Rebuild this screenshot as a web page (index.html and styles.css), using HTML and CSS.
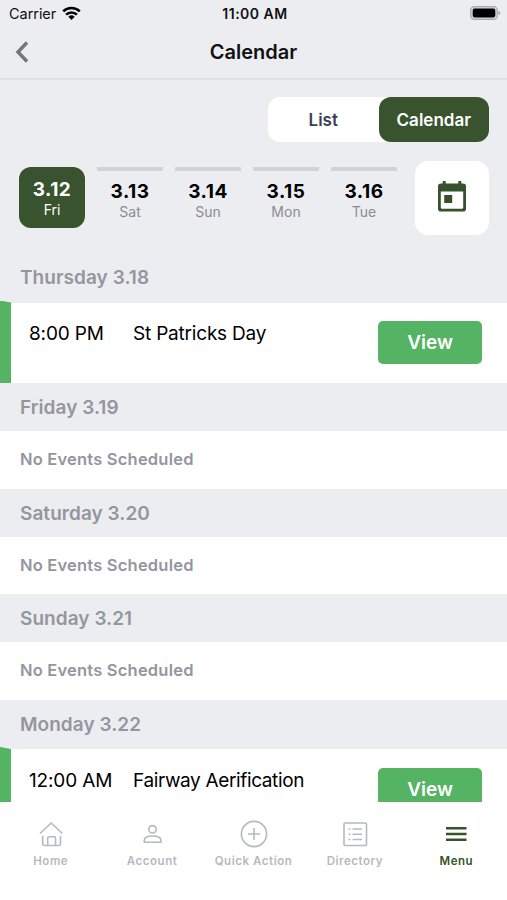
FILE: index.html
```html
<!DOCTYPE html>
<html lang="en">
<head>
<meta charset="utf-8">
<title>Calendar</title>
<link rel="stylesheet" href="styles.css">
</head>
<body>
<div class="app">
  <div class="status">
    <div class="carrier"><span>Carrier</span>
      <svg class="wifi" width="19" height="15" viewBox="0 0 20 15" fill="none" stroke="#000" stroke-width="2.7"><path d="M1.3 5.2a12.600 12.600 0 0 1 17.400 0M4.300 8.700a8.200 8.200 0 0 1 11.400 0"/><path d="M6.700 11a4.800 4.800 0 0 1 6.600 0L10 14.400z" fill="#000" stroke="none"/></svg>
    </div>
    <span class="clock">11:00 AM</span>
    <svg class="battery" width="31" height="14" viewBox="0 0 31 14"><rect x=".7" y=".7" width="26.6" height="12.6" rx="3.6" fill="#d5d6d8" stroke="#aaabad" stroke-width="1.2"/><rect x="2.7" y="2.6" width="22.6" height="8.8" rx="1.8"/><path d="M28.4 4.7q2 .7 2 2.3t-2 2.3z" fill="#aaabad"/></svg>
  </div>
  <header class="nav">
    <svg class="back" width="14" height="22" viewBox="0 0 14 22" fill="none" stroke="#76777a" stroke-width="3.5"><path d="M12 1.5 3 11l9 9.5"/></svg>
    <h1>Calendar</h1>
  </header>
  <main class="content">
    <div class="toggle"><button class="option">List</button><button class="option selected">Calendar</button></div>
    <div class="days">
      <div class="day active"><b>3.12</b><span>Fri</span></div>
      <div class="day"><b>3.13</b><span>Sat</span></div>
      <div class="day"><b>3.14</b><span>Sun</span></div>
      <div class="day"><b>3.15</b><span>Mon</span></div>
      <div class="day"><b>3.16</b><span>Tue</span></div>
      <button class="picker" aria-label="Pick a date">
        <svg width="28" height="31" viewBox="0 0 28 31" fill="#35522b"><path fill-rule="evenodd" d="M4.7 0h3v2.6h12.6V0h3v2.6h1.9Q28 2.6 28 5.4v22.4q0 2.8-2.8 2.8H2.8Q0 30.600 0 27.800V5.400q0-2.800 2.800-2.800h1.900zM2.800 10.400v16.200q0 1.200 1.200 1.200h20q1.200 0 1.200-1.200V10.400z"/><rect x="6.200" y="14" width="8" height="8"/></svg>
      </button>
    </div>
    <h2 class="date first">Thursday 3.18</h2>
    <article class="event"><span class="time">8:00 PM</span><span class="name">St Patricks Day</span><button class="view">View</button></article>
    <h2 class="date">Friday 3.19</h2>
    <p class="empty">No Events Scheduled</p>
    <h2 class="date">Saturday 3.20</h2>
    <p class="empty">No Events Scheduled</p>
    <h2 class="date">Sunday 3.21</h2>
    <p class="empty">No Events Scheduled</p>
    <h2 class="date last">Monday 3.22</h2>
    <article class="event"><span class="time">12:00 AM</span><span class="name fairway">Fairway Aerification</span><button class="view">View</button></article>
  </main>
  <nav class="tabs">
    <a class="tab"><svg viewBox="0 0 28 28"><path d="m3 13.500 11.200-10.500 11.200 10.500M5.700 15.800v7.700q0 2 2 2h13.800q2 0 2-2v-7.700M10.700 25.500v-7.300q0-1.500 1.500-1.500h4.800q1.500 0 1.500 1.500v7.300"/></svg><span>Home</span></a>
    <a class="tab"><svg viewBox="0 0 28 28"><circle cx="14.500" cy="9.300" r="3.700"/><path d="M6.300 22.200v-1.900c0-3 4-4.300 8.300-4.300s8.300 1.300 8.300 4.300v1.900z"/></svg><span>Account</span></a>
    <a class="tab"><svg viewBox="0 0 28 28"><circle cx="14" cy="14" r="12.600"/><path d="M14 8v12M8 14h12"/></svg><span>Quick Action</span></a>
    <a class="tab"><svg viewBox="0 0 28 28"><rect x="3" y="3" width="22.500" height="22.500" rx="1"/><path d="M7.500 9h2m2 0h9.500M7.500 14.200h2m2 0h9.500M7.500 19.500h2m2 0h9.500"/></svg><span>Directory</span></a>
    <a class="tab current"><svg viewBox="0 0 28 28"><path d="M4 8.300h20.500M4 14h20.500M4 19.700h20.500"/></svg><span>Menu</span></a>
  </nav>
</div>
</body>
</html>
```
FILE: styles.css
```css
* { box-sizing: border-box; }
body { margin: 0; font-family: Inter, "Liberation Sans", sans-serif; background: #fff; color: #111; }
h1, h2, p { margin: 0; }
button { border: 0; padding: 0; font: inherit; color: inherit; background: none; }
svg { display: block; flex: none; }
.app { width: 507px; height: 900px; display: flex; flex-direction: column; overflow: hidden; background: #ecedf1; }
.status { height: 28px; flex: none; display: grid; grid-template-columns: 1fr auto 1fr; align-items: center; padding: 0 6px 0 9px; font-size: 14.5px; }
.carrier { display: flex; align-items: center; gap: 6px; margin-top: -2px; letter-spacing: -.05px; }
.clock { font-weight: 600; font-size: 14px; letter-spacing: .5px; margin-top: -1px; }
.battery { justify-self: end; margin-top: -2px; }
.nav { height: 52px; flex: none; display: grid; grid-template-columns: 1fr auto 1fr; align-items: center; padding: 0 15px 3px; border-bottom: 2px solid #dfe0e3; }
h1 { font-size: 20px; line-height: 24px; font-weight: 600; padding-top: 1px; }
.content { flex: 1; min-height: 0; overflow: hidden; }
.toggle { display: flex; width: 221px; height: 45px; margin: 17px 18px 0 auto; background: #fff; border-radius: 12px; }
.option { flex: 1; font-size: 17px; font-weight: 600; color: #3c3f52; border-radius: 12px; padding-top: 1px; }
.option.selected { background: #38532d; color: #fff; }
.days { display: flex; align-items: flex-start; gap: 12px; height: 75px; margin: 18px 18px 0 19px; }
.day { width: 66px; height: 61px; margin-top: 7px; display: flex; flex-direction: column; align-items: center; border-top: 4px solid #d2d3d7; padding-top: 9px; color: #000; }
.day b { font-size: 19px; line-height: 23px; font-weight: 700; letter-spacing: .5px; }
.day span { font-size: 14px; line-height: 18px; color: #8b8c91; }
.day.active { border: 0; border-radius: 12px; background: #38532d; color: #fff; padding-top: 11px; }
.day.active span { color: #fff; }
.picker { width: 74px; height: 74px; margin-top: 1px; margin-left: auto; border-radius: 13px; background: #fff; display: flex; align-items: center; justify-content: center; padding-bottom: 3px; }
.date { height: 48px; line-height: 49px; padding-left: 20px; font-size: 19px; font-weight: 600; color: #94969e; letter-spacing: .05px; }
.date.first { height: 67.500px; line-height: 85px; }
.date.last { height: 49.500px; }
.event { position: relative; height: 80.500px; display: flex; align-items: flex-start; padding: 18.600px 25px 0 29px; background: #fff; font-size: 19px; line-height: 26px; letter-spacing: -.15px; color: #000; }
.event::before { content: ""; position: absolute; left: 0; top: -2px; bottom: 0; width: 11px; background: #55b364; clip-path: polygon(0 0, 100% 2px, 100% 100%, 0 100%); }
.time { width: 104px; }
.name { letter-spacing: -.2px; }
.name.fairway { letter-spacing: -.36px; }
.view { width: 104px; height: 43px; margin-left: auto; border-radius: 5px; background: #55b364; color: #fff; font-weight: 600; font-size: 19px; letter-spacing: 0; padding-top: 1px; }
.empty { height: 57.500px; line-height: 57px; padding-left: 20px; background: #fff; font-size: 16.500px; font-weight: 600; color: #94969e; letter-spacing: .2px; }
.tabs { height: 98px; flex: none; display: flex; background: #fff; padding-top: 18px; }
.tab { flex: 1; display: flex; flex-direction: column; align-items: center; gap: 6px; color: #b6b9bd; font-size: 11.500px; line-height: 15px; font-weight: 600; letter-spacing: .55px; white-space: nowrap; }
.tab svg { width: 28px; height: 28px; fill: none; stroke: currentColor; stroke-width: 1.600; }
.tab.current { color: #38532d; }
.tab.current svg { stroke-width: 2.400; }
```
